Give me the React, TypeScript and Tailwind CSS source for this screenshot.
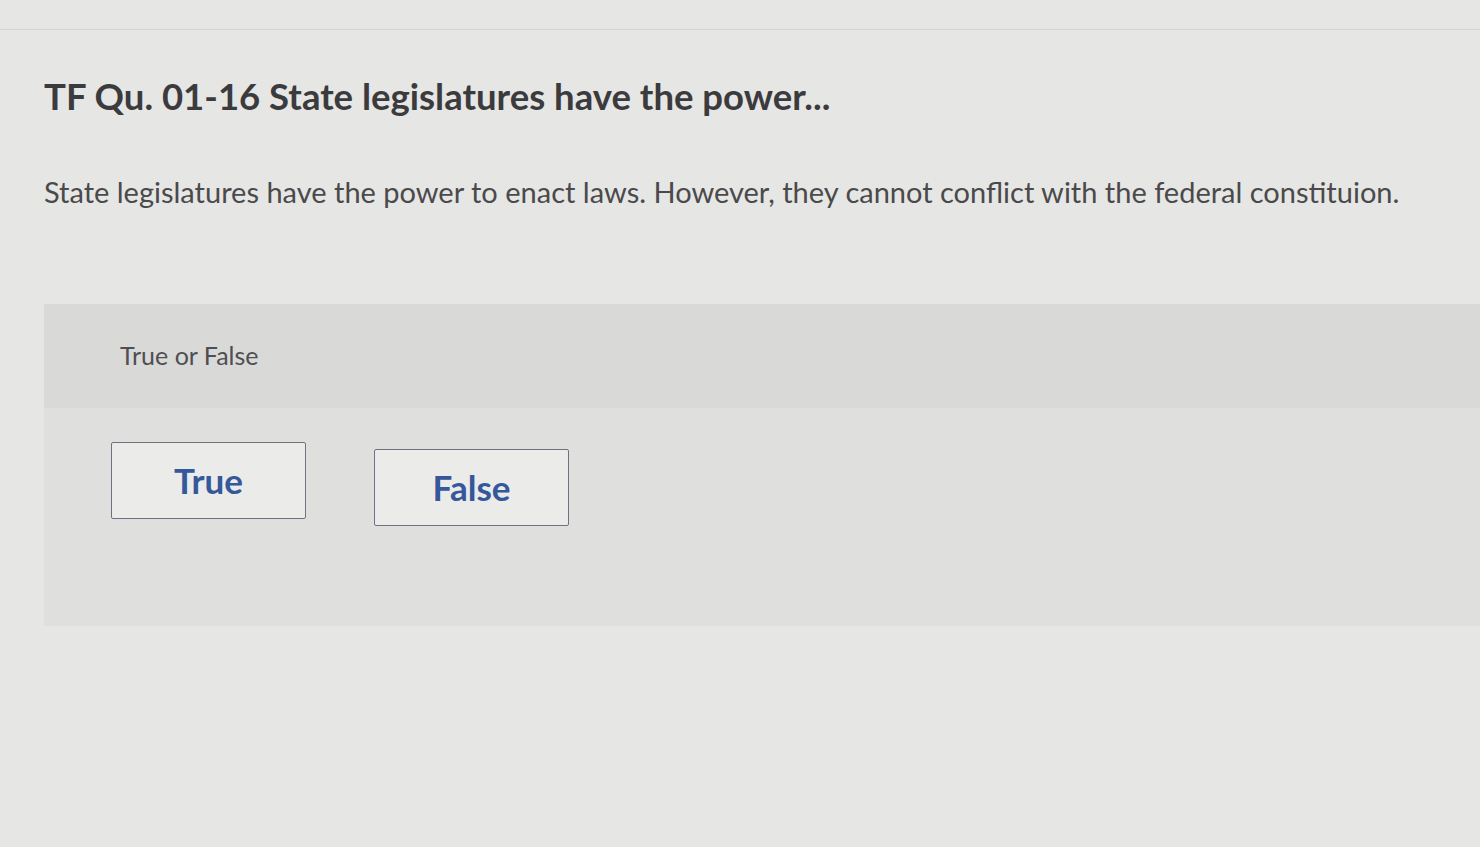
export default function App() {
  return (
    <div
      className="min-h-[847px] w-full bg-[#e6e6e4] text-[#3a3a3c]"
      style={{ fontFamily: "Lato, 'Open Sans', sans-serif" }}
    >
      <div className="h-[30px] border-b border-[#d3d3d1]" />
      <div className="pl-[44px]">
        <h1 className="mt-[44px] text-[36.5px] font-bold leading-[44px] text-[#3b3b3e]">
          TF Qu. 01-16 State legislatures have the power...
        </h1>
        <p className="mt-[54px] text-[29px] leading-[40px] text-[#4a4a4c]">
          State legislatures have the power to enact laws. However, they cannot conflict with the federal constituion.
        </p>
        <section className="mt-[92px] bg-[#dfdfdd]">
          <div className="flex h-[104px] items-center bg-[#d9d9d8] pl-[76px]">
            <span className="text-[25px] text-[#4f4f52]">True or False</span>
          </div>
          <div className="flex gap-[68px] pb-[100px] pl-[67px] pt-[34px]">
            <button className="flex h-[77px] w-[195px] items-center justify-center rounded-[2px] border-[1.5px] border-[#6d7280] bg-[#ebebea] text-[35px] font-bold text-[#34589a]">
              True
            </button>
            <button className="mt-[7px] flex h-[77px] w-[195px] items-center justify-center rounded-[2px] border-[1.5px] border-[#6d7280] bg-[#ebebea] text-[35px] font-bold text-[#34589a]">
              False
            </button>
          </div>
        </section>
      </div>
    </div>
  );
}
